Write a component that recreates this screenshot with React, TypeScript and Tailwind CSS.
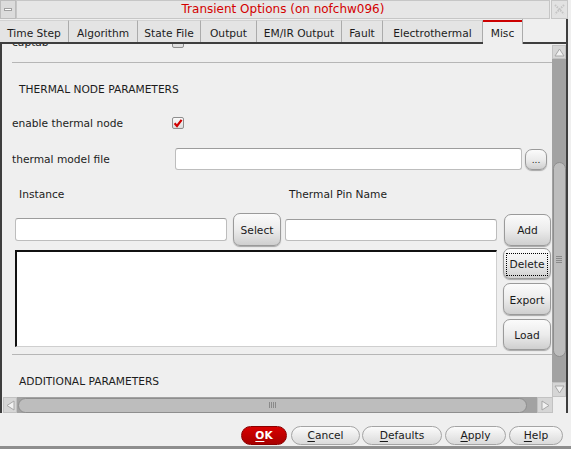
import React from "react";

function Check({ checked }: { checked?: boolean }) {
  return (
    <div className="w-[12px] h-[12px] rounded-[2px] border border-[#8e8e8e] bg-linear-to-b from-[#fafafa] to-[#dcdcdc] flex items-center justify-center shrink-0">
      {checked && (
        <svg width="10" height="10" viewBox="0 0 10 10">
          <path d="M1.6 5.2 L4 8 L8.6 1.8" fill="none" stroke="#d00000" strokeWidth="2.2" />
        </svg>
      )}
    </div>
  );
}

function Btn({ children, className = "", focus = false }: { children: React.ReactNode; className?: string; focus?: boolean }) {
  return (
    <div
      className={
        "rounded-[7px] border border-[#9a9a9a] bg-linear-to-b from-[#fbfbfb] via-[#ececec] to-[#cfcfcf] shadow-[0_1px_1px_rgba(0,0,0,0.3)] flex items-center justify-center shrink-0 text-[#1a1a1a] pt-[2px] " +
        className
      }
    >
      {focus ? (
        <div className="border border-dotted border-black px-[2px] h-[23px] w-[42px] flex items-center justify-center">{children}</div>
      ) : (
        children
      )}
    </div>
  );
}

function Pill({ children, className = "" }: { children: React.ReactNode; className?: string }) {
  return (
    <div
      className={
        "h-[19px] rounded-full border border-[#a4a4a4] bg-linear-to-b from-[#fbfbfb] to-[#dadada] flex items-center justify-center shrink-0 text-[#1a1a1a] " +
        className
      }
    >
      {children}
    </div>
  );
}

function Input({ className = "" }: { className?: string }) {
  return <div className={"bg-white rounded-[3px] border border-[#bdbdbd] border-t-[#9c9c9c] shrink-0 " + className} />;
}

function Arrow({ dir }: { dir: "up" | "down" | "left" | "right" }) {
  const pts: Record<string, string> = {
    up: "1,9 5.5,2 10,9",
    down: "1,2 5.5,9 10,2",
    left: "9,1 2,5.5 9,10",
    right: "2,1 9,5.5 2,10",
  };
  return (
    <svg width="11" height="11" viewBox="0 0 11 11">
      <polygon points={pts[dir]} fill="#f2f2f2" stroke="#a8a8a8" strokeWidth="1" />
    </svg>
  );
}

const tabs: [string, number][] = [
  ["Time Step", 69],
  ["Algorithm", 69],
  ["State File", 63],
  ["Output", 56],
  ["EM/IR Output", 85],
  ["Fault", 41],
  ["Electrothermal", 100],
];

export default function App() {
  return (
    <div className="w-[571px] h-[449px] bg-[#efefef] flex flex-col overflow-hidden font-['DejaVu_Sans',sans-serif] text-[10.67px] leading-[13px] text-[#1c1c1c]">
      {/* title bar */}
      <div className="h-[19px] flex shrink-0">
        <div className="w-[16px] bg-[#dcdcdc] border border-[#bcbcbc] flex items-center justify-center">
          <div className="w-[8px] h-[3px] bg-white border border-[#a0a0a0]" />
        </div>
        <div className="w-[534px] bg-[#e6e6e6] border border-[#c6c6c6] flex items-center justify-center text-[12px] text-[#d40000]">
          Transient Options (on nofchw096)
        </div>
        <div className="ml-[1px] w-[17px] bg-[#e2e2e2] border border-[#c6c6c6] flex items-center justify-center">
          <svg width="11" height="11" viewBox="0 0 11 11">
            <path d="M1 1 L10 10 M10 1 L1 10" stroke="#c4c4c4" strokeWidth="2" strokeDasharray="1.5 1" fill="none" />
          </svg>
        </div>
      </div>

      {/* tabs */}
      <div className="h-[25px] flex shrink-0 w-[568px]">
        {tabs.map(([t, w]) => (
          <div
            key={t}
            style={{ width: w }}
            className="h-full pt-[1px] flex flex-col shrink-0 border-b-2 border-[#3e3e3e]"
          >
            <div className="flex-1 bg-[#e4e4e4] border-t border-r border-[#ababab] border-t-[#d2d2d2] flex items-center justify-center pt-[3px]">
              {t}
            </div>
          </div>
        ))}
        <div className="w-[40px] h-full flex flex-col shrink-0 border-r border-[#ababab]">
          <div className="h-[2px] mt-[1px] bg-[#cc0000]" />
          <div className="flex-1 bg-[#efefef] flex items-center justify-center">Misc</div>
        </div>
        <div className="flex-1 h-full border-b-2 border-r-2 border-[#3e3e3e]" />
      </div>

      {/* frame */}
      <div className="w-[568px] h-[369px] border-l-2 border-r-2 border-[#3e3e3e] flex flex-col shrink-0">
        <div className="h-[353px] flex">
          {/* viewport */}
          <div className="w-[550px] h-full overflow-hidden">
            <div className="-mt-[12px] flex flex-col">
              <div className="h-[20px] pl-[10px] flex items-center">
                <div className="w-[160px]">captab</div>
                <Check />
              </div>
              <div className="mt-[10px] ml-[10px] h-[1px] bg-[#b6b6b6]" />
              <div className="mt-[16px] h-[20px] pl-[17px] flex items-center">THERMAL NODE PARAMETERS</div>
              <div className="mt-[14px] h-[20px] pl-[10px] flex items-center">
                <div className="w-[160px]">enable thermal node</div>
                <Check checked />
              </div>
              <div className="mt-[15px] h-[22px] pl-[10px] flex items-center">
                <div className="w-[163px]">thermal model file</div>
                <Input className="w-[347px] h-[22px]" />
                <Btn className="ml-[3px] w-[22px] h-[21px] rounded-[5px] text-[9px]">...</Btn>
              </div>
              <div className="mt-[14px] h-[20px] pl-[17px] flex items-center">
                <div className="w-[270px]">Instance</div>
                <div>Thermal Pin Name</div>
              </div>
              <div className="mt-[9px] h-[33px] pl-[13px] flex items-center">
                <Input className="w-[212px] h-[23px]" />
                <Btn className="ml-[6px] w-[48px] h-[33px]">Select</Btn>
                <Input className="ml-[4px] w-[212px] h-[22px]" />
                <Btn className="ml-[7px] w-[47px] h-[32px]">Add</Btn>
              </div>
              <div className="mt-[2px] pl-[13px] flex items-start">
                <div className="mt-[2px] w-[482px] h-[97px] bg-white border-t-2 border-l-2 border-[#111] border-r border-b border-r-[#cfcfcf] border-b-[#cfcfcf]" />
                <div className="ml-[6px] w-[48px] flex flex-col">
                  <Btn focus className="h-[31px] w-[48px]">Delete</Btn>
                  <Btn className="mt-[4px] h-[32px] w-[48px]">Export</Btn>
                  <Btn className="mt-[4px] h-[31px] w-[48px]">Load</Btn>
                </div>
              </div>
              <div className="mt-[4px] ml-[10px] h-[1px] bg-[#b6b6b6]" />
              <div className="mt-[16px] h-[20px] pl-[17px] flex items-center">ADDITIONAL PARAMETERS</div>
            </div>
          </div>
          {/* vertical scrollbar */}
          <div className="w-[14px] h-full flex flex-col">
            <div className="mt-[1px] h-[14px] bg-[#d6d6d6] border border-[#c2c2c2] flex items-center justify-center">
              <Arrow dir="up" />
            </div>
            <div className="flex-1 bg-[#a2a2a2] flex flex-col items-center">
              <div className="mt-[103px] w-[13px] h-[195px] rounded-full bg-[#bdbdbd] border border-[#8e8e8e] flex items-center justify-center">
                <div className="flex flex-col gap-[1px]">
                  <div className="w-[6px] h-[1px] bg-[#8a8a8a]" />
                  <div className="w-[6px] h-[1px] bg-[#8a8a8a]" />
                  <div className="w-[6px] h-[1px] bg-[#8a8a8a]" />
                  <div className="w-[6px] h-[1px] bg-[#8a8a8a]" />
                </div>
              </div>
            </div>
            <div className="h-[15px] bg-[#d6d6d6] border border-[#c2c2c2] flex items-center justify-center">
              <Arrow dir="down" />
            </div>
          </div>
        </div>
        {/* horizontal scrollbar */}
        <div className="h-[16px] flex">
          <div className="ml-[1px] w-[14px] bg-[#d6d6d6] border border-[#c2c2c2] flex items-center justify-center">
            <Arrow dir="left" />
          </div>
          <div className="w-[520px] bg-[#a2a2a2] flex items-center">
            <div className="ml-[1px] w-[509px] h-[15px] rounded-full bg-[#bdbdbd] border border-[#8e8e8e] flex items-center justify-center">
              <div className="flex gap-[1px]">
                <div className="w-[1px] h-[6px] bg-[#8a8a8a]" />
                <div className="w-[1px] h-[6px] bg-[#8a8a8a]" />
                <div className="w-[1px] h-[6px] bg-[#8a8a8a]" />
                <div className="w-[1px] h-[6px] bg-[#8a8a8a]" />
              </div>
            </div>
          </div>
          <div className="w-[16px] bg-[#d6d6d6] border border-[#c2c2c2] flex items-center justify-center">
            <Arrow dir="right" />
          </div>
          <div className="flex-1 bg-[#efefef]" />
        </div>
      </div>

      {/* button bar */}
      <div className="h-[33px] pt-[13px] flex items-start shrink-0">
        <div className="ml-[241px] w-[46px] h-[19px] rounded-full border border-[#8a0000] bg-linear-to-b from-[#d80000] to-[#a80000] flex items-center justify-center text-white font-bold">
          <span className="underline underline-offset-2">O</span>K
        </div>
        <Pill className="ml-[4px] w-[69px]">
          <span className="underline underline-offset-2">C</span>ancel
        </Pill>
        <Pill className="ml-[2px] w-[80px]">
          <span className="underline underline-offset-2">D</span>efaults
        </Pill>
        <Pill className="ml-[3px] w-[61px]">
          <span className="underline underline-offset-2">A</span>pply
        </Pill>
        <Pill className="ml-[3px] w-[54px]">
          <span className="underline underline-offset-2">H</span>elp
        </Pill>
      </div>
      <div className="h-[3px] bg-[#8e8e8e] shrink-0" />
    </div>
  );
}
